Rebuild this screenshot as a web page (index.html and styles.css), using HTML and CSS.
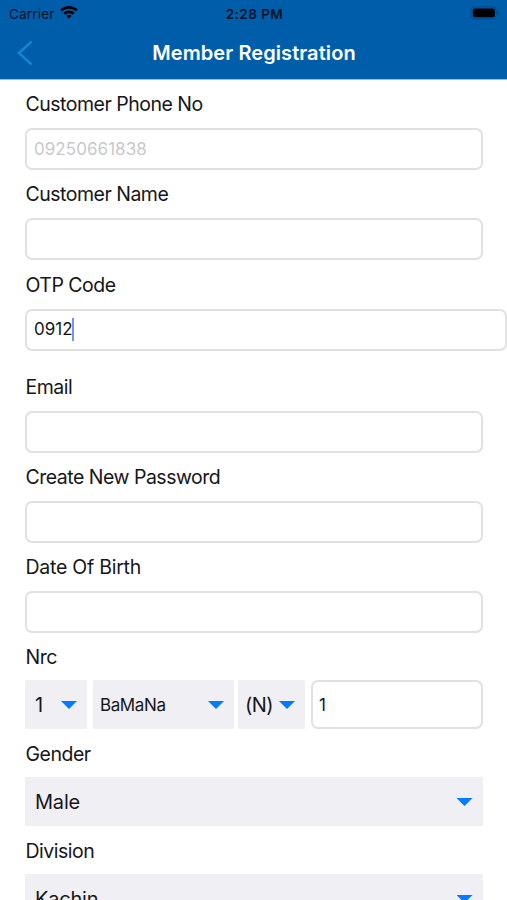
FILE: index.html
```html
<!DOCTYPE html>
<html lang="en">
<head>
<meta charset="utf-8">
<title>Member Registration</title>
<link rel="stylesheet" href="styles.css">
</head>
<body>
<header class="header">
  <div class="status">
    <div class="carrier"><span>Carrier</span>
      <svg class="wifi" width="18" height="14" viewBox="0 0 18 14"><path d="M9 0C5.600 0 2.500 1.300.200 3.500L2.100 5.500C3.900 3.800 6.300 2.800 9 2.800s5.100 1 6.900 2.700l1.900-2C15.500 1.300 12.400 0 9 0z"/><path d="M9 4.500c-2.100 0-4.100.800-5.600 2.200l1.900 2C6.300 7.800 7.600 7.200 9 7.200s2.700.600 3.700 1.500l1.900-2C13.100 5.300 11.100 4.500 9 4.500z"/><path d="M9 8.800c-1 0-1.900.400-2.600 1L9 12.800l2.600-3c-.700-.600-1.600-1-2.600-1z"/></svg>
    </div>
    <span class="time">2:28 PM</span>
    <svg class="battery" width="30" height="14" viewBox="0 0 30 14"><rect x="1.200" y=".900" width="25" height="12" rx="3.500" fill="none" stroke="#00468a" stroke-width="1"/><rect x="2.800" y="2.500" width="22" height="8.800" rx="2" fill="#000"/><path d="M27.500 5v4c1.500-.500 1.500-3.500 0-4z" fill="#00468a"/></svg>
  </div>
  <div class="nav">
    <svg class="back" width="16" height="26" viewBox="0 0 16 26"><path d="M14.500 1.500L2 13l12.500 11.500" fill="none" stroke="#1683d3" stroke-width="2.500"/></svg>
    <h1 class="title">Member Registration</h1>
  </div>
</header>
<main class="form">
  <div class="field"><div class="label">Customer Phone No</div><div class="input muted">09250661838</div></div>
  <div class="field"><div class="label">Customer Name</div><div class="input"></div></div>
  <div class="field otp"><div class="label">OTP Code</div><div class="input wide">0912<i class="caret"></i></div></div>
  <div class="field"><div class="label">Email</div><div class="input"></div></div>
  <div class="field"><div class="label">Create New Password</div><div class="input"></div></div>
  <div class="field"><div class="label birth">Date Of Birth</div><div class="input"></div></div>
  <div class="field"><div class="label">Nrc</div>
    <div class="nrc">
      <div class="select">1<i class="arrow"></i></div>
      <div class="select township">BaMaNa<i class="arrow"></i></div>
      <div class="select kind">(N)<i class="arrow"></i></div>
      <div class="input number">1</div>
    </div>
  </div>
  <div class="field picker"><div class="label">Gender</div><div class="select full">Male<i class="arrow"></i></div></div>
  <div class="field picker"><div class="label">Division</div><div class="select full">Kachin<i class="arrow"></i></div></div>
</main>
</body>
</html>
```
FILE: styles.css
```css
* { box-sizing: border-box; }
body { margin: 0; height: 900px; overflow: hidden; background: #fff; color: #161618; font-family: Inter, "Liberation Sans", sans-serif; }
.header { height: 80px; background: #005daa; border-bottom: 1px solid #8fc0e2; }
.status { height: 27px; display: grid; grid-template-columns: 1fr auto 1fr; align-items: center; padding: 0 7px 0 9px; font-size: 13px; color: #001428; }
.carrier { display: flex; align-items: center; gap: 5px; }
.carrier span { font-size: 13.500px; letter-spacing: 0.200px; }
.wifi { fill: #000; margin-top: -1px; }
.time { font-weight: 600; font-size: 13.500px; letter-spacing: 0.450px; }
.battery { justify-self: end; margin-top: -1px; }
.nav { height: 51px; display: grid; grid-template-columns: 60px 1fr 60px; align-items: center; }
.back { margin-left: 17px; }
.title { margin: 0; padding-left: 1px; text-align: center; font-size: 20px; font-weight: 600; letter-spacing: 0.080px; color: #fff; white-space: nowrap; }
.form { padding: 0 24.500px 0 25px; }
.label { height: 48px; padding-left: 0.500px; line-height: 49px; font-size: 19.500px; letter-spacing: -0.500px; white-space: nowrap; }
.birth { letter-spacing: -0.250px; }
.input { height: 42px; border: 2px solid #e1e1e1; border-radius: 7px; padding: 0 7px; display: flex; align-items: center; font-size: 17px; letter-spacing: 0.050px; }
.muted { color: #c8c8ca; }
.otp { padding: 1px 0 12px; }
.wide { width: 482px; padding-bottom: 2px; }
.caret { width: 2px; height: 23px; margin-left: -1px; background: #7595f4; }
.picker .label { line-height: 51px; }
.nrc { display: flex; height: 49px; margin-top: -1px; }
.select { width: 62px; height: 49px; border-radius: 1px; background: #f0eff4; padding: 1px 10px 0; display: flex; align-items: center; justify-content: space-between; font-size: 20px; letter-spacing: -0.200px; }
.arrow { width: 16px; height: 8px; background: #007aff; clip-path: polygon(0 0, 100% 0, 50% 100%); }
.township { width: 141px; margin-left: 6px; padding-left: 7px; font-size: 17px; letter-spacing: -0.400px; }
.kind { width: 67px; margin-left: 4px; padding-left: 7px; letter-spacing: -0.500px; }
.number { flex: 1; height: 49px; margin-left: 6px; padding-left: 6px; }
.full { width: auto; }
```
